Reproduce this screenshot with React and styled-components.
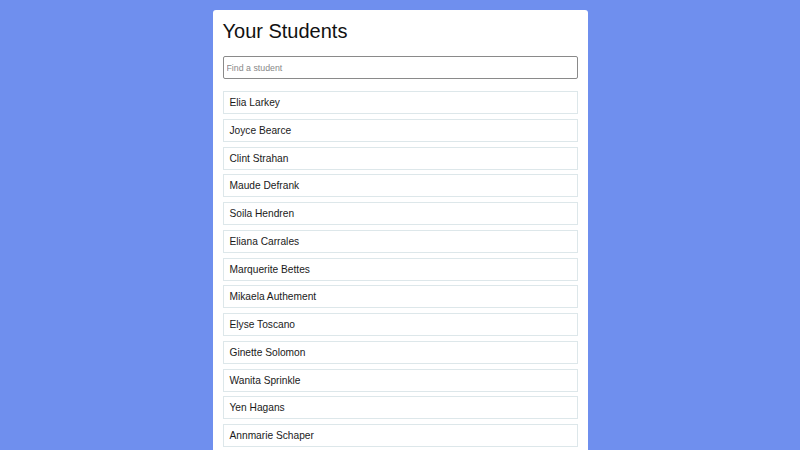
import React, { useState } from "react";
import styled, { createGlobalStyle } from "styled-components";

const GlobalStyle = createGlobalStyle`
    body {
        margin: 0;
        background-color: #6f8fee;
        font-family: "Liberation Sans", Arial, sans-serif;
    }
`;

const Card = styled.div`
    width: 355px;
    margin: 10px auto 0;
    padding: 10px;
    background-color: #fff;
    border-radius: 3px;
`;

const Title = styled.h1`
    margin: 0 0 13px;
    font-size: 20px;
    font-weight: normal;
    line-height: 23px;
    color: #111;
`;

const SearchInput = styled.input`
    display: block;
    box-sizing: border-box;
    width: 100%;
    height: 23px;
    padding: 0 3px;
    border: 1px solid #8a8a8a;
    border-radius: 2px;
    font-family: "Liberation Sans", Arial, sans-serif;
    font-size: 8.8px;
    outline: none;

    &::placeholder {
        color: #888;
    }
`;

const List = styled.ul`
    list-style: none;
    margin: 12px 0 0;
    padding: 0;
    display: flex;
    flex-direction: column;
    gap: 4.75px;
`;

const Item = styled.li`
    box-sizing: border-box;
    height: 23px;
    padding: 0 6px;
    display: flex;
    align-items: center;
    border: 1px solid #dde7ea;
    font-size: 10.2px;
    color: #1a1a1a;
`;

const students = [
    "Elia Larkey",
    "Joyce Bearce",
    "Clint Strahan",
    "Maude Defrank",
    "Soila Hendren",
    "Eliana Carrales",
    "Marquerite Bettes",
    "Mikaela Authement",
    "Elyse Toscano",
    "Ginette Solomon",
    "Wanita Sprinkle",
    "Yen Hagans",
    "Annmarie Schaper",
];

export default function App() {
    const [query, setQuery] = useState("");
    const shown = students.filter((s) =>
        s.toLowerCase().includes(query.toLowerCase())
    );

    return (
        <>
            <GlobalStyle />
            <Card>
                <Title>Your Students</Title>
                <SearchInput
                    placeholder="Find a student"
                    value={query}
                    onChange={(e) => setQuery(e.target.value)}
                />
                <List>
                    {shown.map((name) => (
                        <Item key={name}>{name}</Item>
                    ))}
                </List>
            </Card>
        </>
    );
}
